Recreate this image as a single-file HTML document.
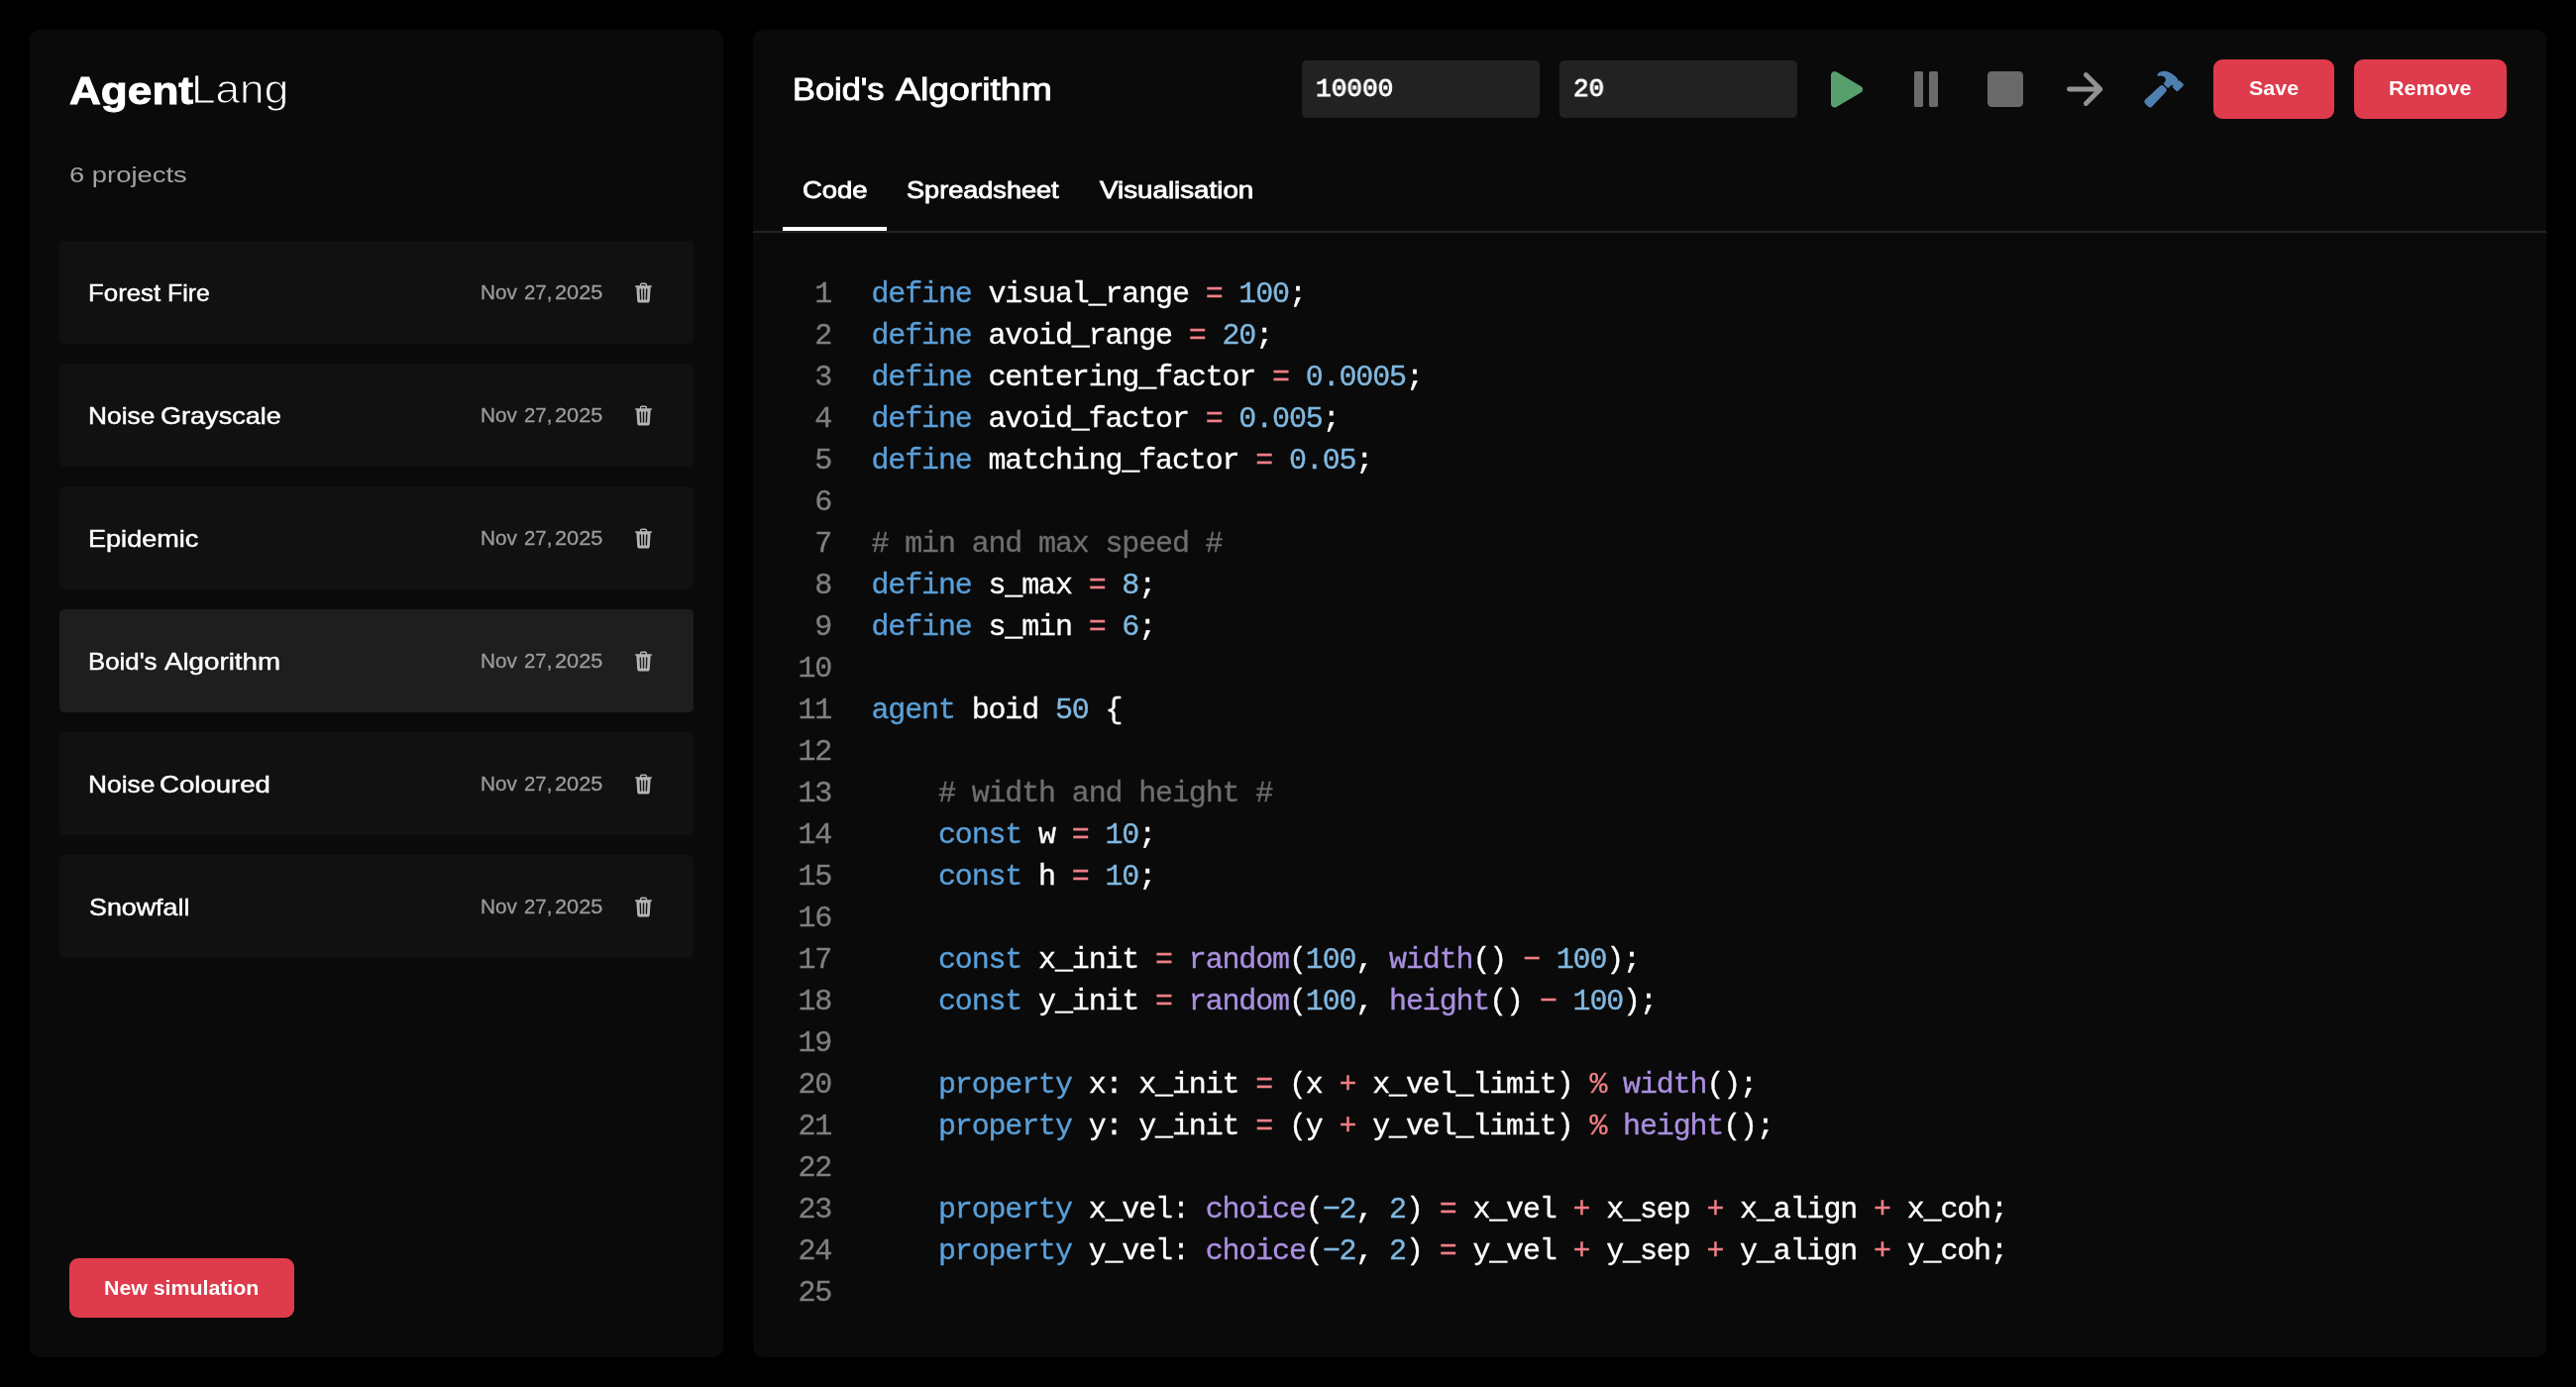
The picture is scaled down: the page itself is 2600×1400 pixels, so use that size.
<!DOCTYPE html>
<html><head><meta charset="utf-8"><title>AgentLang</title>
<style>
html,body{margin:0;padding:0;background:#000;}
body{width:2600px;height:1400px;position:relative;overflow:hidden;font-family:"Liberation Sans",sans-serif;}
div{box-sizing:border-box;}
</style></head><body>
<div style="position:absolute;left:30px;top:30px;width:700px;height:1340px;background:#0a0a0a;border-radius:10px;"></div>
<div style="position:absolute;left:760px;top:30px;width:1810px;height:1340px;background:#0a0a0a;border-radius:10px;"></div>
<div style="position:absolute;left:69.99px;top:65.75px;font:700 39px/51px 'Liberation Sans',sans-serif;color:#fff;white-space:pre;will-change:transform;transform-origin:0 0;transform:scaleX(1.1317);-webkit-text-stroke:0.9px #fff;">Agent</div>
<div style="position:absolute;left:192.81px;top:63.25px;font:400 41.5px/54px 'Liberation Sans',sans-serif;color:#fff;white-space:pre;will-change:transform;transform-origin:0 0;transform:scaleX(1.0642);-webkit-text-stroke:1.0px #0a0a0a;">Lang</div>
<div style="position:absolute;left:69.68px;top:161.75px;font:400 22px/29px 'Liberation Sans',sans-serif;color:#a3a3a3;white-space:pre;will-change:transform;transform-origin:0 0;transform:scaleX(1.2452);">6 projects</div>
<div style="position:absolute;left:60px;top:243px;width:640px;height:104px;background:#111111;border-radius:5px;"></div>
<div style="position:absolute;left:88.97px;top:280.20px;font:400 23.8px/31px 'Liberation Sans',sans-serif;color:#fff;white-space:pre;will-change:transform;transform-origin:0 0;transform:scaleX(1.0856);-webkit-text-stroke:0.45px #fff;">Forest</div>
<div style="position:absolute;left:168.61px;top:280.20px;font:400 23.8px/31px 'Liberation Sans',sans-serif;color:#fff;white-space:pre;will-change:transform;transform-origin:0 0;transform:scaleX(1.0413);-webkit-text-stroke:0.45px #fff;">Fire</div>
<div style="position:absolute;left:484.89px;top:281.90px;font:400 19.5px/26px 'Liberation Sans',sans-serif;color:#9b9b9b;white-space:pre;will-change:transform;transform-origin:0 0;transform:scaleX(1.0616);-webkit-text-stroke:0.3px #9b9b9b;">Nov</div>
<div style="position:absolute;left:528.77px;top:281.90px;font:400 19.5px/26px 'Liberation Sans',sans-serif;color:#9b9b9b;white-space:pre;will-change:transform;transform-origin:0 0;transform:scaleX(1.0435);-webkit-text-stroke:0.3px #9b9b9b;">27,</div>
<div style="position:absolute;left:560.31px;top:281.90px;font:400 19.5px/26px 'Liberation Sans',sans-serif;color:#9b9b9b;white-space:pre;will-change:transform;transform-origin:0 0;transform:scaleX(1.1130);-webkit-text-stroke:0.3px #9b9b9b;">2025</div>
<svg style="position:absolute;left:638px;top:283.5px" width="23" height="23" viewBox="0 0 512 512"><path fill="#b4b4b4" d="M432 96h-96V72a40 40 0 00-40-40h-80a40 40 0 00-40 40v24H80a16 16 0 000 32h17l19 304.92c1.42 26.85 22 47.08 48 47.08h184c26.13 0 46.3-19.78 48-47l19-305h17a16 16 0 000-32zM192.57 416H192a16 16 0 01-16-15.43l-8-224a16 16 0 1132-1.14l8 224A16 16 0 01192.57 416zM272 400a16 16 0 01-32 0V176a16 16 0 0132 0zm32-304h-96V72a7.91 7.91 0 018-8h80a7.91 7.91 0 018 8zm32 304.57A16 16 0 01320 416h-.58A16 16 0 01304 399.43l8-224a16 16 0 1132 1.14z"/></svg>
<div style="position:absolute;left:60px;top:367px;width:640px;height:104px;background:#111111;border-radius:5px;"></div>
<div style="position:absolute;left:88.68px;top:404.20px;font:400 23.8px/31px 'Liberation Sans',sans-serif;color:#fff;white-space:pre;will-change:transform;transform-origin:0 0;transform:scaleX(1.1055);-webkit-text-stroke:0.45px #fff;">Noise</div>
<div style="position:absolute;left:161.62px;top:404.20px;font:400 23.8px/31px 'Liberation Sans',sans-serif;color:#fff;white-space:pre;will-change:transform;transform-origin:0 0;transform:scaleX(1.1375);-webkit-text-stroke:0.45px #fff;">Grayscale</div>
<div style="position:absolute;left:484.89px;top:405.90px;font:400 19.5px/26px 'Liberation Sans',sans-serif;color:#9b9b9b;white-space:pre;will-change:transform;transform-origin:0 0;transform:scaleX(1.0616);-webkit-text-stroke:0.3px #9b9b9b;">Nov</div>
<div style="position:absolute;left:528.77px;top:405.90px;font:400 19.5px/26px 'Liberation Sans',sans-serif;color:#9b9b9b;white-space:pre;will-change:transform;transform-origin:0 0;transform:scaleX(1.0435);-webkit-text-stroke:0.3px #9b9b9b;">27,</div>
<div style="position:absolute;left:560.31px;top:405.90px;font:400 19.5px/26px 'Liberation Sans',sans-serif;color:#9b9b9b;white-space:pre;will-change:transform;transform-origin:0 0;transform:scaleX(1.1130);-webkit-text-stroke:0.3px #9b9b9b;">2025</div>
<svg style="position:absolute;left:638px;top:407.5px" width="23" height="23" viewBox="0 0 512 512"><path fill="#b4b4b4" d="M432 96h-96V72a40 40 0 00-40-40h-80a40 40 0 00-40 40v24H80a16 16 0 000 32h17l19 304.92c1.42 26.85 22 47.08 48 47.08h184c26.13 0 46.3-19.78 48-47l19-305h17a16 16 0 000-32zM192.57 416H192a16 16 0 01-16-15.43l-8-224a16 16 0 1132-1.14l8 224A16 16 0 01192.57 416zM272 400a16 16 0 01-32 0V176a16 16 0 0132 0zm32-304h-96V72a7.91 7.91 0 018-8h80a7.91 7.91 0 018 8zm32 304.57A16 16 0 01320 416h-.58A16 16 0 01304 399.43l8-224a16 16 0 1132 1.14z"/></svg>
<div style="position:absolute;left:60px;top:491px;width:640px;height:104px;background:#111111;border-radius:5px;"></div>
<div style="position:absolute;left:88.92px;top:528.20px;font:400 23.8px/31px 'Liberation Sans',sans-serif;color:#fff;white-space:pre;will-change:transform;transform-origin:0 0;transform:scaleX(1.1377);-webkit-text-stroke:0.45px #fff;">Epidemic</div>
<div style="position:absolute;left:484.89px;top:529.90px;font:400 19.5px/26px 'Liberation Sans',sans-serif;color:#9b9b9b;white-space:pre;will-change:transform;transform-origin:0 0;transform:scaleX(1.0616);-webkit-text-stroke:0.3px #9b9b9b;">Nov</div>
<div style="position:absolute;left:528.77px;top:529.90px;font:400 19.5px/26px 'Liberation Sans',sans-serif;color:#9b9b9b;white-space:pre;will-change:transform;transform-origin:0 0;transform:scaleX(1.0435);-webkit-text-stroke:0.3px #9b9b9b;">27,</div>
<div style="position:absolute;left:560.31px;top:529.90px;font:400 19.5px/26px 'Liberation Sans',sans-serif;color:#9b9b9b;white-space:pre;will-change:transform;transform-origin:0 0;transform:scaleX(1.1130);-webkit-text-stroke:0.3px #9b9b9b;">2025</div>
<svg style="position:absolute;left:638px;top:531.5px" width="23" height="23" viewBox="0 0 512 512"><path fill="#b4b4b4" d="M432 96h-96V72a40 40 0 00-40-40h-80a40 40 0 00-40 40v24H80a16 16 0 000 32h17l19 304.92c1.42 26.85 22 47.08 48 47.08h184c26.13 0 46.3-19.78 48-47l19-305h17a16 16 0 000-32zM192.57 416H192a16 16 0 01-16-15.43l-8-224a16 16 0 1132-1.14l8 224A16 16 0 01192.57 416zM272 400a16 16 0 01-32 0V176a16 16 0 0132 0zm32-304h-96V72a7.91 7.91 0 018-8h80a7.91 7.91 0 018 8zm32 304.57A16 16 0 01320 416h-.58A16 16 0 01304 399.43l8-224a16 16 0 1132 1.14z"/></svg>
<div style="position:absolute;left:60px;top:615px;width:640px;height:104px;background:#1e1e1e;border-radius:5px;"></div>
<div style="position:absolute;left:88.73px;top:652.20px;font:400 23.8px/31px 'Liberation Sans',sans-serif;color:#fff;white-space:pre;will-change:transform;transform-origin:0 0;transform:scaleX(1.0844);-webkit-text-stroke:0.45px #fff;">Boid&#x27;s</div>
<div style="position:absolute;left:165.82px;top:652.20px;font:400 23.8px/31px 'Liberation Sans',sans-serif;color:#fff;white-space:pre;will-change:transform;transform-origin:0 0;transform:scaleX(1.1635);-webkit-text-stroke:0.45px #fff;">Algorithm</div>
<div style="position:absolute;left:484.89px;top:653.90px;font:400 19.5px/26px 'Liberation Sans',sans-serif;color:#9b9b9b;white-space:pre;will-change:transform;transform-origin:0 0;transform:scaleX(1.0616);-webkit-text-stroke:0.3px #9b9b9b;">Nov</div>
<div style="position:absolute;left:528.77px;top:653.90px;font:400 19.5px/26px 'Liberation Sans',sans-serif;color:#9b9b9b;white-space:pre;will-change:transform;transform-origin:0 0;transform:scaleX(1.0435);-webkit-text-stroke:0.3px #9b9b9b;">27,</div>
<div style="position:absolute;left:560.31px;top:653.90px;font:400 19.5px/26px 'Liberation Sans',sans-serif;color:#9b9b9b;white-space:pre;will-change:transform;transform-origin:0 0;transform:scaleX(1.1130);-webkit-text-stroke:0.3px #9b9b9b;">2025</div>
<svg style="position:absolute;left:638px;top:655.5px" width="23" height="23" viewBox="0 0 512 512"><path fill="#b4b4b4" d="M432 96h-96V72a40 40 0 00-40-40h-80a40 40 0 00-40 40v24H80a16 16 0 000 32h17l19 304.92c1.42 26.85 22 47.08 48 47.08h184c26.13 0 46.3-19.78 48-47l19-305h17a16 16 0 000-32zM192.57 416H192a16 16 0 01-16-15.43l-8-224a16 16 0 1132-1.14l8 224A16 16 0 01192.57 416zM272 400a16 16 0 01-32 0V176a16 16 0 0132 0zm32-304h-96V72a7.91 7.91 0 018-8h80a7.91 7.91 0 018 8zm32 304.57A16 16 0 01320 416h-.58A16 16 0 01304 399.43l8-224a16 16 0 1132 1.14z"/></svg>
<div style="position:absolute;left:60px;top:739px;width:640px;height:104px;background:#111111;border-radius:5px;"></div>
<div style="position:absolute;left:88.68px;top:776.20px;font:400 23.8px/31px 'Liberation Sans',sans-serif;color:#fff;white-space:pre;will-change:transform;transform-origin:0 0;transform:scaleX(1.1055);-webkit-text-stroke:0.45px #fff;">Noise</div>
<div style="position:absolute;left:161.45px;top:776.20px;font:400 23.8px/31px 'Liberation Sans',sans-serif;color:#fff;white-space:pre;will-change:transform;transform-origin:0 0;transform:scaleX(1.1594);-webkit-text-stroke:0.45px #fff;">Coloured</div>
<div style="position:absolute;left:484.89px;top:777.90px;font:400 19.5px/26px 'Liberation Sans',sans-serif;color:#9b9b9b;white-space:pre;will-change:transform;transform-origin:0 0;transform:scaleX(1.0616);-webkit-text-stroke:0.3px #9b9b9b;">Nov</div>
<div style="position:absolute;left:528.77px;top:777.90px;font:400 19.5px/26px 'Liberation Sans',sans-serif;color:#9b9b9b;white-space:pre;will-change:transform;transform-origin:0 0;transform:scaleX(1.0435);-webkit-text-stroke:0.3px #9b9b9b;">27,</div>
<div style="position:absolute;left:560.31px;top:777.90px;font:400 19.5px/26px 'Liberation Sans',sans-serif;color:#9b9b9b;white-space:pre;will-change:transform;transform-origin:0 0;transform:scaleX(1.1130);-webkit-text-stroke:0.3px #9b9b9b;">2025</div>
<svg style="position:absolute;left:638px;top:779.5px" width="23" height="23" viewBox="0 0 512 512"><path fill="#b4b4b4" d="M432 96h-96V72a40 40 0 00-40-40h-80a40 40 0 00-40 40v24H80a16 16 0 000 32h17l19 304.92c1.42 26.85 22 47.08 48 47.08h184c26.13 0 46.3-19.78 48-47l19-305h17a16 16 0 000-32zM192.57 416H192a16 16 0 01-16-15.43l-8-224a16 16 0 1132-1.14l8 224A16 16 0 01192.57 416zM272 400a16 16 0 01-32 0V176a16 16 0 0132 0zm32-304h-96V72a7.91 7.91 0 018-8h80a7.91 7.91 0 018 8zm32 304.57A16 16 0 01320 416h-.58A16 16 0 01304 399.43l8-224a16 16 0 1132 1.14z"/></svg>
<div style="position:absolute;left:60px;top:863px;width:640px;height:104px;background:#111111;border-radius:5px;"></div>
<div style="position:absolute;left:89.93px;top:900.20px;font:400 23.8px/31px 'Liberation Sans',sans-serif;color:#fff;white-space:pre;will-change:transform;transform-origin:0 0;transform:scaleX(1.1273);-webkit-text-stroke:0.45px #fff;">Snowfall</div>
<div style="position:absolute;left:484.89px;top:901.90px;font:400 19.5px/26px 'Liberation Sans',sans-serif;color:#9b9b9b;white-space:pre;will-change:transform;transform-origin:0 0;transform:scaleX(1.0616);-webkit-text-stroke:0.3px #9b9b9b;">Nov</div>
<div style="position:absolute;left:528.77px;top:901.90px;font:400 19.5px/26px 'Liberation Sans',sans-serif;color:#9b9b9b;white-space:pre;will-change:transform;transform-origin:0 0;transform:scaleX(1.0435);-webkit-text-stroke:0.3px #9b9b9b;">27,</div>
<div style="position:absolute;left:560.31px;top:901.90px;font:400 19.5px/26px 'Liberation Sans',sans-serif;color:#9b9b9b;white-space:pre;will-change:transform;transform-origin:0 0;transform:scaleX(1.1130);-webkit-text-stroke:0.3px #9b9b9b;">2025</div>
<svg style="position:absolute;left:638px;top:903.5px" width="23" height="23" viewBox="0 0 512 512"><path fill="#b4b4b4" d="M432 96h-96V72a40 40 0 00-40-40h-80a40 40 0 00-40 40v24H80a16 16 0 000 32h17l19 304.92c1.42 26.85 22 47.08 48 47.08h184c26.13 0 46.3-19.78 48-47l19-305h17a16 16 0 000-32zM192.57 416H192a16 16 0 01-16-15.43l-8-224a16 16 0 1132-1.14l8 224A16 16 0 01192.57 416zM272 400a16 16 0 01-32 0V176a16 16 0 0132 0zm32-304h-96V72a7.91 7.91 0 018-8h80a7.91 7.91 0 018 8zm32 304.57A16 16 0 01320 416h-.58A16 16 0 01304 399.43l8-224a16 16 0 1132 1.14z"/></svg>
<div style="position:absolute;left:70px;top:1270px;width:227px;height:60px;background:#de3b4c;border-radius:9px;"></div>
<div style="position:absolute;left:105.40px;top:1287.00px;font:700 20px/26px 'Liberation Sans',sans-serif;color:#fff;white-space:pre;will-change:transform;transform-origin:0 0;transform:scaleX(1.0653);">New simulation</div>
<div style="position:absolute;left:800.13px;top:70.00px;font:400 30.5px/40px 'Liberation Sans',sans-serif;color:#fff;white-space:pre;will-change:transform;transform-origin:0 0;transform:scaleX(1.1265);-webkit-text-stroke:0.9px #fff;">Boid&#x27;s</div>
<div style="position:absolute;left:903.77px;top:70.00px;font:400 30.5px/40px 'Liberation Sans',sans-serif;color:#fff;white-space:pre;will-change:transform;transform-origin:0 0;transform:scaleX(1.2246);-webkit-text-stroke:0.9px #fff;">Algorithm</div>
<div style="position:absolute;left:1314px;top:61px;width:240px;height:58px;background:#222222;border-radius:5px;"></div>
<div style="position:absolute;left:1574px;top:61px;width:240px;height:58px;background:#222222;border-radius:5px;"></div>
<div style="position:absolute;left:1328.20px;top:73.20px;font:400 26.5px/35px 'Liberation Mono',monospace;color:#fff;white-space:pre;will-change:transform;transform-origin:0 0;transform:scaleX(0.9860);-webkit-text-stroke:0.9px #fff;">10000</div>
<div style="position:absolute;left:1588.28px;top:73.20px;font:400 26.5px/35px 'Liberation Mono',monospace;color:#fff;white-space:pre;will-change:transform;transform-origin:0 0;transform:scaleX(0.9762);-webkit-text-stroke:0.9px #fff;">20</div>
<svg preserveAspectRatio="none" style="position:absolute;left:1847.8px;top:71.75px;overflow:visible" width="32.3" height="36.5" viewBox="96 72 321 368"><path fill="#57a06e" d="M133 440a35.37 35.37 0 01-17.5-4.67c-12-6.8-19.46-20-19.46-34.33V111c0-14.37 7.46-27.53 19.46-34.33a35.13 35.13 0 0135.77.45l247.85 148.36a36 36 0 010 61l-247.89 148.4A35.5 35.5 0 01133 440z"/></svg>
<div style="position:absolute;left:1932.2px;top:71.75px;width:8.7px;height:36.5px;background:#6b6b6b;border-radius:1.7px;"></div>
<div style="position:absolute;left:1947.0px;top:71.75px;width:8.6px;height:36.5px;background:#6b6b6b;border-radius:1.7px;"></div>
<div style="position:absolute;left:2005.9px;top:71.75px;width:36.3px;height:36.5px;background:#696969;border-radius:4.2px;"></div>
<svg style="position:absolute;left:2085.9px;top:73px;overflow:visible" width="36.3" height="34" viewBox="76 88 360 336"><path fill="none" stroke="#929292" stroke-width="48" stroke-linecap="round" stroke-linejoin="round" d="M268 112l144 144-144 144M392 256H100"/></svg>
<svg style="position:absolute;left:2163.1px;top:69px;overflow:visible" width="42.1" height="42.1" viewBox="0 0 512 512"><path fill="#4e7fb1" d="M280.16 242.79l-26.11-26.12a32 32 0 00-45.14-.12L27.38 384.08c-6.61 6.23-10.95 14.17-11.35 23.06a32.11 32.11 0 009.21 23.94l39 39.43a.46.46 0 00.07.07A32.29 32.29 0 0087 480h1.18c8.89-.33 16.85-4.5 23.17-11.17l168.7-180.7a32 32 0 00.11-45.34zM490 190l-.31-.31-34.27-33.92a21.46 21.46 0 00-15.28-6.26 21.89 21.89 0 00-12.79 4.14c0-.43.06-.85.09-1.22.45-6.5 1.15-16.32-5.2-25.22a258 258 0 00-24.8-28.74.6.6 0 00-.08-.08c-13.32-13.12-42.31-37.83-86.72-55.94A139.55 139.55 0 00257.56 32C226 32 202 46.24 192.81 54.68a119.92 119.92 0 00-14.18 16.22 16 16 0 0018.65 24.34 74.45 74.45 0 018.58-2.63 63.46 63.46 0 0118.45-1.15c13.19 1.09 28.79 7.64 35.69 13.09 11.7 9.41 17.33 22.09 18.26 41.09.18 3.82-7.72 18.14-20 34.48a16 16 0 001.45 21l34.41 34.41a16 16 0 0022 .62c9.73-8.69 24.55-21.79 29.73-25 7.69-4.73 13.19-5.64 14.7-5.8a19.18 19.18 0 0111.29 2.38 1.24 1.24 0 01-.31.95l-1.82 1.73-.3.28a21.52 21.52 0 00.05 30.54l34.26 33.91a21.45 21.45 0 0015.28 6.25 21.7 21.7 0 0015.22-6.2l55.5-54.82c.19-.19.38-.39.56-.59a21.87 21.87 0 00.72-29.78z"/></svg>
<div style="position:absolute;left:2234px;top:60px;width:122px;height:60px;background:#de3b4c;border-radius:9px;"></div>
<div style="position:absolute;left:2269.98px;top:76.40px;font:700 19.5px/26px 'Liberation Sans',sans-serif;color:#fff;white-space:pre;will-change:transform;transform-origin:0 0;transform:scaleX(1.0990);">Save</div>
<div style="position:absolute;left:2376px;top:60px;width:154px;height:60px;background:#de3b4c;border-radius:9px;"></div>
<div style="position:absolute;left:2411.02px;top:76.40px;font:700 19.5px/26px 'Liberation Sans',sans-serif;color:#fff;white-space:pre;will-change:transform;transform-origin:0 0;transform:scaleX(1.1009);">Remove</div>
<div style="position:absolute;left:809.64px;top:175.50px;font:400 24px/32px 'Liberation Sans',sans-serif;color:#fff;white-space:pre;will-change:transform;transform-origin:0 0;transform:scaleX(1.1429);-webkit-text-stroke:0.8px #fff;">Code</div>
<div style="position:absolute;left:915.20px;top:175.50px;font:400 24px/32px 'Liberation Sans',sans-serif;color:#fff;white-space:pre;will-change:transform;transform-origin:0 0;transform:scaleX(1.1285);-webkit-text-stroke:0.8px #fff;">Spreadsheet</div>
<div style="position:absolute;left:1109.93px;top:175.50px;font:400 24px/32px 'Liberation Sans',sans-serif;color:#fff;white-space:pre;will-change:transform;transform-origin:0 0;transform:scaleX(1.1561);-webkit-text-stroke:0.8px #fff;">Visualisation</div>
<div style="position:absolute;left:760px;top:233px;width:1810px;height:2px;background:#222222;border-radius:0px;"></div>
<div style="position:absolute;left:790px;top:229px;width:105px;height:4px;background:#ffffff;border-radius:0px;"></div>
<div style="position:absolute;left:0;top:276.00px;font:400 30.0px/42px 'Liberation Mono',monospace;letter-spacing:-1.1469px;white-space:pre;color:#fff;-webkit-text-stroke:0.35px;will-change:transform">
<div style="position:absolute;left:822.34px;top:0px;color:#7f7f7f">1</div>
<div style="position:absolute;left:879.5px;top:0px"><span style="color:#5a9fd8">define</span> visual_range <span style="color:#f07e85">=</span> <span style="color:#80b8e0">100</span>;</div>
<div style="position:absolute;left:822.34px;top:42px;color:#7f7f7f">2</div>
<div style="position:absolute;left:879.5px;top:42px"><span style="color:#5a9fd8">define</span> avoid_range <span style="color:#f07e85">=</span> <span style="color:#80b8e0">20</span>;</div>
<div style="position:absolute;left:822.34px;top:84px;color:#7f7f7f">3</div>
<div style="position:absolute;left:879.5px;top:84px"><span style="color:#5a9fd8">define</span> centering_factor <span style="color:#f07e85">=</span> <span style="color:#80b8e0">0.0005</span>;</div>
<div style="position:absolute;left:822.34px;top:126px;color:#7f7f7f">4</div>
<div style="position:absolute;left:879.5px;top:126px"><span style="color:#5a9fd8">define</span> avoid_factor <span style="color:#f07e85">=</span> <span style="color:#80b8e0">0.005</span>;</div>
<div style="position:absolute;left:822.34px;top:168px;color:#7f7f7f">5</div>
<div style="position:absolute;left:879.5px;top:168px"><span style="color:#5a9fd8">define</span> matching_factor <span style="color:#f07e85">=</span> <span style="color:#80b8e0">0.05</span>;</div>
<div style="position:absolute;left:822.34px;top:210px;color:#7f7f7f">6</div>
<div style="position:absolute;left:822.34px;top:252px;color:#7f7f7f">7</div>
<div style="position:absolute;left:879.5px;top:252px"><span style="color:#6e6e6e"># min and max speed #</span></div>
<div style="position:absolute;left:822.34px;top:294px;color:#7f7f7f">8</div>
<div style="position:absolute;left:879.5px;top:294px"><span style="color:#5a9fd8">define</span> s_max <span style="color:#f07e85">=</span> <span style="color:#80b8e0">8</span>;</div>
<div style="position:absolute;left:822.34px;top:336px;color:#7f7f7f">9</div>
<div style="position:absolute;left:879.5px;top:336px"><span style="color:#5a9fd8">define</span> s_min <span style="color:#f07e85">=</span> <span style="color:#80b8e0">6</span>;</div>
<div style="position:absolute;left:805.49px;top:378px;color:#7f7f7f">10</div>
<div style="position:absolute;left:805.49px;top:420px;color:#7f7f7f">11</div>
<div style="position:absolute;left:879.5px;top:420px"><span style="color:#5a9fd8">agent</span> boid <span style="color:#80b8e0">50</span> {</div>
<div style="position:absolute;left:805.49px;top:462px;color:#7f7f7f">12</div>
<div style="position:absolute;left:805.49px;top:504px;color:#7f7f7f">13</div>
<div style="position:absolute;left:879.5px;top:504px">    <span style="color:#6e6e6e"># width and height #</span></div>
<div style="position:absolute;left:805.49px;top:546px;color:#7f7f7f">14</div>
<div style="position:absolute;left:879.5px;top:546px">    <span style="color:#5a9fd8">const</span> w <span style="color:#f07e85">=</span> <span style="color:#80b8e0">10</span>;</div>
<div style="position:absolute;left:805.49px;top:588px;color:#7f7f7f">15</div>
<div style="position:absolute;left:879.5px;top:588px">    <span style="color:#5a9fd8">const</span> h <span style="color:#f07e85">=</span> <span style="color:#80b8e0">10</span>;</div>
<div style="position:absolute;left:805.49px;top:630px;color:#7f7f7f">16</div>
<div style="position:absolute;left:805.49px;top:672px;color:#7f7f7f">17</div>
<div style="position:absolute;left:879.5px;top:672px">    <span style="color:#5a9fd8">const</span> x_init <span style="color:#f07e85">=</span> <span style="color:#aa8fe0">random</span>(<span style="color:#80b8e0">100</span>, <span style="color:#aa8fe0">width</span>() <span style="color:#f07e85">−</span> <span style="color:#80b8e0">100</span>);</div>
<div style="position:absolute;left:805.49px;top:714px;color:#7f7f7f">18</div>
<div style="position:absolute;left:879.5px;top:714px">    <span style="color:#5a9fd8">const</span> y_init <span style="color:#f07e85">=</span> <span style="color:#aa8fe0">random</span>(<span style="color:#80b8e0">100</span>, <span style="color:#aa8fe0">height</span>() <span style="color:#f07e85">−</span> <span style="color:#80b8e0">100</span>);</div>
<div style="position:absolute;left:805.49px;top:756px;color:#7f7f7f">19</div>
<div style="position:absolute;left:805.49px;top:798px;color:#7f7f7f">20</div>
<div style="position:absolute;left:879.5px;top:798px">    <span style="color:#5a9fd8">property</span> x: x_init <span style="color:#f07e85">=</span> (x <span style="color:#f07e85">+</span> x_vel_limit) <span style="color:#f07e85">%</span> <span style="color:#aa8fe0">width</span>();</div>
<div style="position:absolute;left:805.49px;top:840px;color:#7f7f7f">21</div>
<div style="position:absolute;left:879.5px;top:840px">    <span style="color:#5a9fd8">property</span> y: y_init <span style="color:#f07e85">=</span> (y <span style="color:#f07e85">+</span> y_vel_limit) <span style="color:#f07e85">%</span> <span style="color:#aa8fe0">height</span>();</div>
<div style="position:absolute;left:805.49px;top:882px;color:#7f7f7f">22</div>
<div style="position:absolute;left:805.49px;top:924px;color:#7f7f7f">23</div>
<div style="position:absolute;left:879.5px;top:924px">    <span style="color:#5a9fd8">property</span> x_vel: <span style="color:#aa8fe0">choice</span>(<span style="color:#80b8e0">−2</span>, <span style="color:#80b8e0">2</span>) <span style="color:#f07e85">=</span> x_vel <span style="color:#f07e85">+</span> x_sep <span style="color:#f07e85">+</span> x_align <span style="color:#f07e85">+</span> x_coh;</div>
<div style="position:absolute;left:805.49px;top:966px;color:#7f7f7f">24</div>
<div style="position:absolute;left:879.5px;top:966px">    <span style="color:#5a9fd8">property</span> y_vel: <span style="color:#aa8fe0">choice</span>(<span style="color:#80b8e0">−2</span>, <span style="color:#80b8e0">2</span>) <span style="color:#f07e85">=</span> y_vel <span style="color:#f07e85">+</span> y_sep <span style="color:#f07e85">+</span> y_align <span style="color:#f07e85">+</span> y_coh;</div>
<div style="position:absolute;left:805.49px;top:1008px;color:#7f7f7f">25</div>
</div>
</body></html>
